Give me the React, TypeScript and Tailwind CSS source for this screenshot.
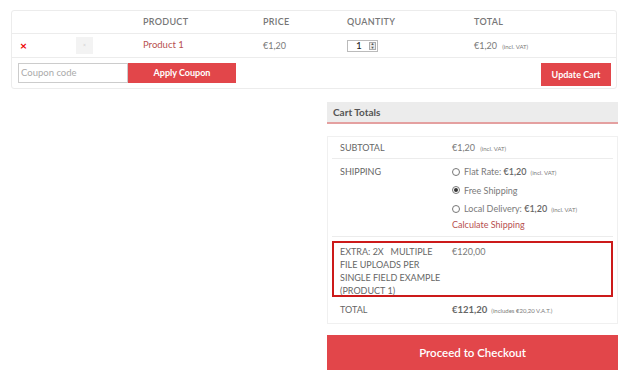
const red = 'bg-[#e2464a]';

const Radio = ({ checked }: { checked?: boolean }) => (
  <span className="inline-flex h-[8px] w-[8px] items-center justify-center rounded-full border border-[#777] bg-white">
    {checked && <span className="h-[4px] w-[4px] rounded-full bg-[#333]" />}
  </span>
);

export default function App() {
  return (
    <div className="min-h-screen w-[623px] bg-white font-['Lato',_'Open_Sans',_sans-serif] text-[9px] text-[#7a7a7a]">
      <div className="pl-[11px] pr-[6px] pt-[10px]">
        {/* cart table */}
        <div className="rounded-[3px] border border-[#ececec]">
          <div className="flex h-[23px] items-center border-b border-[#ececec] text-[9px] font-semibold uppercase tracking-[0.3px] text-[#777]">
            <div className="w-[131px]" />
            <div className="w-[120px]">Product</div>
            <div className="w-[84px]">Price</div>
            <div className="w-[127px]">Quantity</div>
            <div>Total</div>
          </div>
          <div className="flex h-[24px] items-center border-b border-[#ececec]">
            <div className="w-[64px] pl-[8px] text-[12px] font-bold leading-none text-[#e00]">×</div>
            <div className="flex w-[67px] items-center">
              <div className="flex h-[17px] w-[17px] items-center justify-center bg-[#f3f3f3] text-[5px] text-[#ccc]">×</div>
            </div>
            <div className="w-[120px] text-[9.5px] text-[#b7504f]">Product 1</div>
            <div className="w-[84px]">€1,20</div>
            <div className="w-[127px]">
              <div className="flex h-[12px] w-[31px] items-center justify-between border border-[#bbb] pl-[8px] pr-[1px] text-[10px] text-[#222]">
                <span>1</span>
                <span className="flex h-[8px] w-[7px] flex-col items-center justify-center border border-[#aaa] bg-[#e8e8e8] text-[4px] leading-[4px] text-[#555]">
                  <span>▲</span>
                  <span>▼</span>
                </span>
              </div>
            </div>
            <div>
              €1,20 <span className="ml-[3px] text-[6px]">(incl. VAT)</span>
            </div>
          </div>
          <div className="flex h-[30px] items-center justify-between pl-[6px] pr-[5px]">
            <div className="flex h-[20px]">
              <div className="flex w-[110px] items-center border border-[#ccc] pl-[2px] text-[9.5px] text-[#aaa]">Coupon code</div>
              <button className={`w-[108px] ${red} text-[9px] font-bold text-white`}>Apply Coupon</button>
            </div>
            <button className={`mt-[3px] h-[23px] w-[70px] ${red} text-[9px] font-bold text-white`}>Update Cart</button>
          </div>
        </div>

        {/* cart totals */}
        <div className="mt-[13px] flex justify-end">
          <div className="mr-[-1px] w-[291px]">
            <div className="flex h-[22px] items-center border-b-2 border-[#e4a0a0] bg-[#ececec] pl-[6px] text-[10px] font-bold text-[#555]">
              Cart Totals
            </div>
            <div className="mt-[12px] border border-[#f0f0f0] px-[4px]">
              <div className="flex h-[22px] items-center border-b border-[#ececec] pl-[8px]">
                <div className="w-[112px] uppercase text-[#666]">Subtotal</div>
                <div>
                  €1,20 <span className="ml-[3px] text-[6px]">(incl. VAT)</span>
                </div>
              </div>
              <div className="flex border-b border-[#ececec] pb-[5px] pl-[8px] pt-[6px]">
                <div className="w-[112px] uppercase text-[#666]">Shipping</div>
                <div className="flex flex-col gap-[5px]">
                  <div className="flex items-center gap-[4px]">
                    <Radio />
                    <span>
                      Flat Rate: <span className="font-semibold text-[#666]">€1,20</span>
                      <span className="ml-[4px] text-[6px]">(incl. VAT)</span>
                    </span>
                  </div>
                  <div className="flex items-center gap-[4px]">
                    <Radio checked />
                    <span>Free Shipping</span>
                  </div>
                  <div className="flex items-center gap-[4px]">
                    <Radio />
                    <span>
                      Local Delivery: <span className="font-semibold text-[#666]">€1,20</span>
                      <span className="ml-[4px] text-[6px]">(incl. VAT)</span>
                    </span>
                  </div>
                  <div className="-mt-[3px] text-[#b7504f]">Calculate Shipping</div>
                </div>
              </div>
              <div className="mt-[4px] flex h-[56px] border-2 border-[#cc1a1a] pl-[6px] pt-[2px]">
                <div className="w-[112px] uppercase leading-[13px] text-[#666]">
                  Extra: 2X&nbsp;&nbsp; Multiple File uploads per single field example (Product 1)
                </div>
                <div className="leading-[13px]">€120,00</div>
              </div>
              <div className="flex h-[26px] items-center pl-[8px]">
                <div className="w-[112px] uppercase text-[#666]">Total</div>
                <div>
                  <span className="text-[9.5px] font-bold text-[#666]">€121,20</span>
                  <span className="ml-[4px] text-[6px]">(includes €20,20 V.A.T.)</span>
                </div>
              </div>
            </div>
            <button className={`mt-[11px] h-[35px] w-full ${red} text-[11.5px] font-semibold text-white`}>
              Proceed to Checkout
            </button>
          </div>
        </div>
      </div>
    </div>
  );
}
